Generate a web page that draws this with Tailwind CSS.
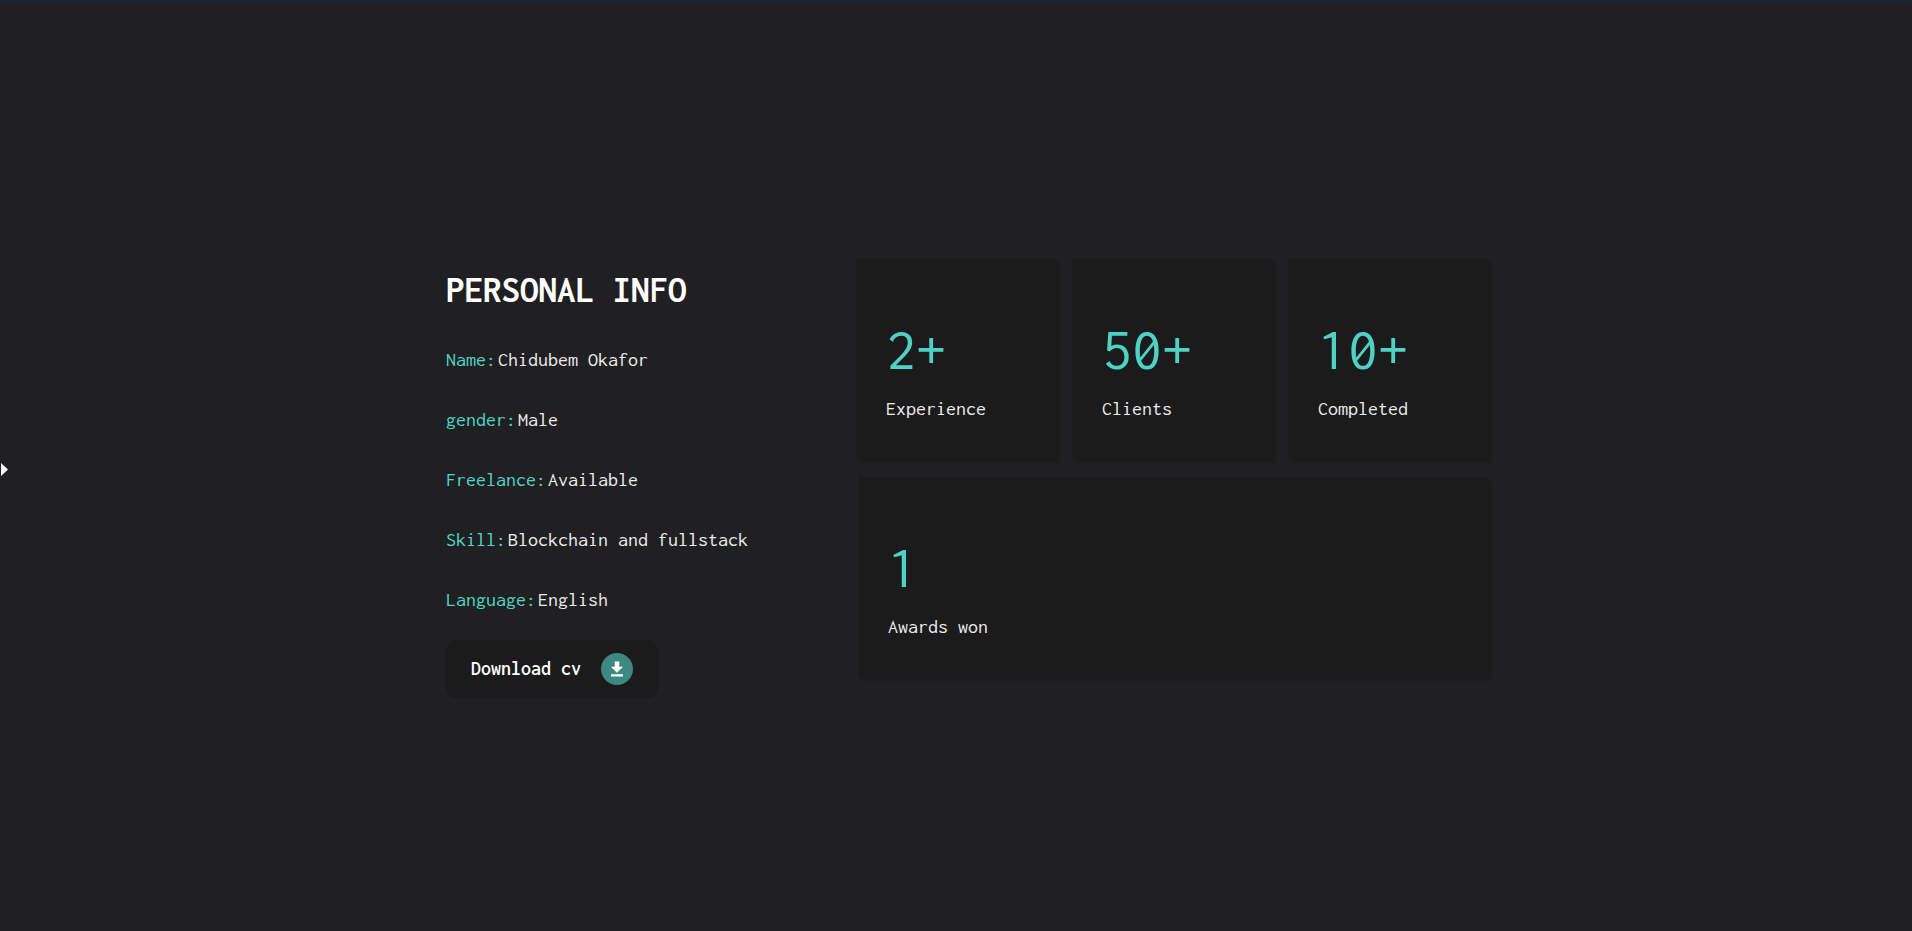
<!DOCTYPE html>
<html lang="en">
<head>
<meta charset="utf-8">
<meta name="viewport" content="width=device-width, initial-scale=1">
<title>Personal Info</title>
<script src="https://cdn.jsdelivr.net/npm/@tailwindcss/browser@4"></script>
</head>
<body class="relative flex min-h-screen items-center justify-center border-t-3 border-[#20232c] bg-[#202022] pt-[23px] pl-[22px] font-['Inconsolata','Noto_Sans_Mono_CJK_JP','Liberation_Mono',monospace] text-[20px] leading-[24px] text-[#ececec]">
  <button type="button" aria-label="Open menu" class="absolute top-1/2 left-px -mt-1">
    <svg class="block h-[13px] w-[7px]" viewBox="0 0 14 26" fill="#fff" aria-hidden="true"><path d="M0 0 14 13 0 26Z"/></svg>
  </button>
  <main class="flex w-full max-w-[1042px] items-start justify-between">
    <section class="pt-[11px]">
      <h1 class="mb-[38px] text-[37px] leading-[40px] font-bold text-white">PERSONAL INFO</h1>
      <dl class="space-y-9">
        <div class="flex gap-[2px]"><dt class="text-[#4ed6c9]">Name:</dt><dd>Chidubem Okafor</dd></div>
        <div class="flex gap-[2px]"><dt class="text-[#4ed6c9]">gender:</dt><dd>Male</dd></div>
        <div class="flex gap-[2px]"><dt class="text-[#4ed6c9]">Freelance:</dt><dd>Available</dd></div>
        <div class="flex gap-[2px]"><dt class="text-[#4ed6c9]">Skill:</dt><dd>Blockchain and fullstack</dd></div>
        <div class="flex gap-[2px]"><dt class="text-[#4ed6c9]">Language:</dt><dd>English</dd></div>
      </dl>
      <button type="button" class="mt-7 flex items-center gap-5 rounded-[10px] bg-[#1b1b1b] px-[25px] py-[13px] font-semibold text-white">
        Download cv
        <span class="flex size-8 items-center justify-center rounded-full bg-[#3c8982]">
          <svg class="size-[18px]" viewBox="0 0 24 24" fill="#fff" aria-hidden="true"><path d="M20 9h-5V2H9v7H4l8 8 8-8ZM4 19h16v3H4Z"/></svg>
        </span>
      </button>
    </section>
    <section class="grid grid-cols-3 gap-x-4 gap-y-[18px]">
      <article class="h-[200px] w-[200px] bg-[#1b1b1b] px-[30px] pt-[58px] shadow-[3px_3px_2px_#1b1b1b]">
        <p class="text-[60px] leading-[64px] text-[#4ed2c5]">2+</p><p class="mt-4">Experience</p>
      </article>
      <article class="h-[200px] w-[200px] bg-[#1b1b1b] px-[30px] pt-[58px] shadow-[3px_3px_2px_#1b1b1b]">
        <p class="text-[60px] leading-[64px] text-[#4ed2c5]">50+</p><p class="mt-4">Clients</p>
      </article>
      <article class="h-[200px] w-[200px] bg-[#1b1b1b] px-[30px] pt-[58px] shadow-[3px_3px_2px_#1b1b1b]">
        <p class="text-[60px] leading-[64px] text-[#4ed2c5]">10+</p><p class="mt-4">Completed</p>
      </article>
      <article class="col-span-3 ml-[2px] h-[200px] bg-[#1b1b1b] px-[30px] pt-[58px] shadow-[3px_3px_2px_#1b1b1b]">
        <p class="text-[60px] leading-[64px] text-[#4ed2c5]">1</p><p class="mt-4">Awards won</p>
      </article>
    </section>
  </main>
</body>
</html>
